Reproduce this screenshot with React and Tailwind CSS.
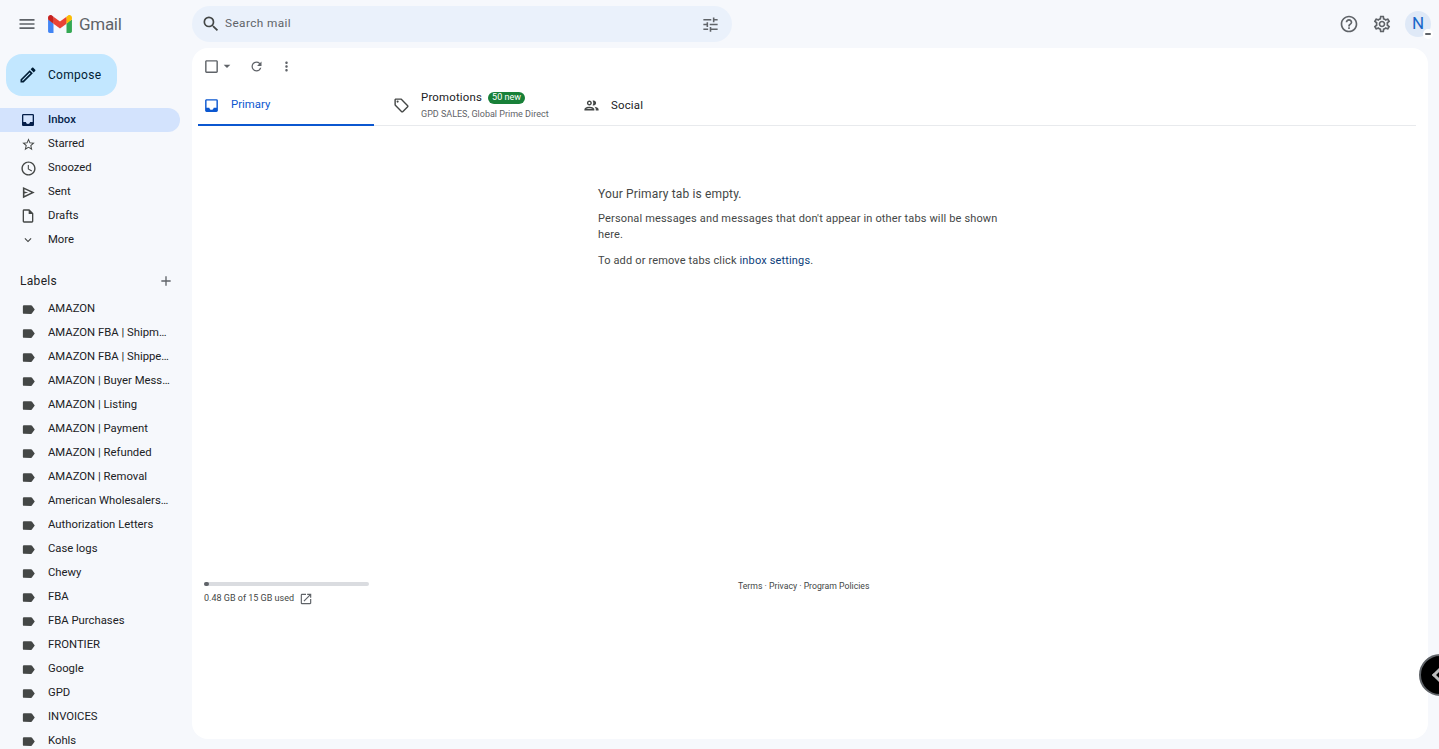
import React from "react";
import {
  MdMenu, MdSearch, MdTune, MdHelpOutline, MdOutlineSettings, MdStarBorder, MdAccessTime,
  MdOutlineInsertDriveFile, MdExpandMore, MdAdd, MdLabel, MdInbox, MdOutlineLocalOffer, MdOutlinePeople,
  MdRefresh, MdMoreVert, MdArrowDropDown, MdCheckBoxOutlineBlank, MdOpenInNew, MdOutlineEdit,
} from "react-icons/md";

function Sent({ size = 20, className }) {
  return (
    <svg width={size} height={size} viewBox="0 0 24 24" fill="currentColor" className={className}>
      <path d="M3 21V3l19 9-19 9zm2.500-3.900L16.400 12 5.500 6.900v3.400l6 1.700-6 1.700v3.400z" />
    </svg>
  );
}

const nav = [
  ["Starred", MdStarBorder, 15],
  ["Snoozed", MdAccessTime, 17],
  ["Sent", Sent, 15],
  ["Drafts", MdOutlineInsertDriveFile, 16],
  ["More", MdExpandMore, 14],
];

const labels = [
  "AMAZON",
  "AMAZON FBA | Shipment Closed",
  "AMAZON FBA | Shipped Items",
  "AMAZON | Buyer Messages",
  "AMAZON | Listing",
  "AMAZON | Payment",
  "AMAZON | Refunded",
  "AMAZON | Removal",
  "American Wholesalers Inc",
  "Authorization Letters",
  "Case logs",
  "Chewy",
  "FBA",
  "FBA Purchases",
  "FRONTIER",
  "Google",
  "GPD",
  "INVOICES",
  "Kohls",
  "Macys",
];

function Row({ icon: Icon, text, iconSize = 20, active }) {
  return (
    <div className={`flex h-6 w-[180px] shrink-0 items-center rounded-r-full pl-[18px] ${active ? "bg-[#d3e3fd] text-[#041e49]" : "text-[#202124]"}`}>
      <span className={`flex w-5 justify-center ${active ? "text-[#041e49]" : "text-[#444746]"}`}>
        <Icon size={iconSize} />
      </span>
      <span className={`ml-[10px] w-[123px] truncate pt-px text-[11.3px] ${active ? "font-medium" : ""}`}>{text}</span>
    </div>
  );
}

export default function App() {
  return (
    <div className="flex h-screen flex-col overflow-hidden bg-[#f6f8fc] font-['Roboto',sans-serif] text-[#202124]">
      <header className="flex h-12 shrink-0 items-center">
        <div className="flex w-[192px] items-center pl-[17px]">
          <MdMenu size={20} className="text-[#5f6368]" />
          <svg width="24" height="18" viewBox="0 0 256 193" className="ml-[11px]">
            <path fill="#4285F4" d="M58.182 192.05V93.14L27.507 65.077 0 49.504v125.091c0 9.658 7.825 17.455 17.455 17.455h40.727Z" />
            <path fill="#34A853" d="M197.818 192.05h40.727c9.659 0 17.455-7.826 17.455-17.455V49.505l-31.156 17.837-27.026 25.798v98.91Z" />
            <path fill="#EA4335" d="m58.182 93.14-4.174-38.647 4.174-36.989L128 69.868l69.818-52.364 4.669 34.992-4.669 40.644L128 145.504z" />
            <path fill="#FBBC04" d="M197.818 17.504V93.14L256 49.504V26.231c0-21.585-24.64-33.89-41.89-20.945l-16.292 12.218Z" />
            <path fill="#C5221F" d="m0 49.504 26.759 20.07L58.182 93.14V17.504L41.89 5.286C24.61-7.66 0 4.646 0 26.23v23.273Z" />
          </svg>
          <span className="ml-[7px] text-[17px] leading-none tracking-[-0.3px] text-[#5f6368]">Gmail</span>
        </div>
        <div className="flex h-9 w-[540px] items-center rounded-full bg-[#eaf1fb] pl-[9px] pr-[12px]">
          <MdSearch size={20} className="text-[#444746]" />
          <span className="ml-[4px] flex-1 text-[11.8px] tracking-[0.4px] text-[#5f6368]">Search mail</span>
          <MdTune size={19} className="text-[#5f6368]" />
        </div>
        <div className="ml-auto flex items-center pr-[8px]">
          <MdHelpOutline size={20} className="text-[#5f6368]" />
          <MdOutlineSettings size={20} className="ml-[13px] text-[#5f6368]" />
          <div className="relative ml-[13px] flex h-[26px] w-[26px] items-center justify-center rounded-full bg-[#dfe9f7] text-[17px] text-[#1a67c9]">
            N
            <span className="absolute -bottom-[2px] -right-[2px] flex h-[10px] w-[10px] items-center justify-center rounded-full bg-white">
              <span className="h-[2px] w-[6px] rounded-full bg-[#5f6368]" />
            </span>
          </div>
        </div>
      </header>

      <div className="flex min-h-0 flex-1">
        <aside className="flex w-[192px] shrink-0 flex-col overflow-hidden">
          <button className="ml-[6px] mt-[6px] flex h-[42px] w-[111px] shrink-0 items-center rounded-2xl bg-[#c2e7ff] pl-[12px] text-[12px] font-normal tracking-[0.3px] text-[#001d35]">
            <MdOutlineEdit size={20} />
            <span className="ml-[10px]">Compose</span>
          </button>
          <div className="mt-3 flex flex-col">
            <Row icon={MdInbox} text="Inbox" iconSize={16} active />
            {nav.map(([t, I, s]) => (
              <Row key={t} icon={I} text={t} iconSize={s} />
            ))}
          </div>
          <div className="mt-[17px] flex h-6 w-[180px] shrink-0 items-center justify-between pl-5 pr-[6px]">
            <span className="text-[12px] tracking-[0.3px] text-[#202124]">Labels</span>
            <MdAdd size={16} className="text-[#5f6368]" />
          </div>
          <div className="mt-1 flex flex-col">
            {labels.map((t) => (
              <Row key={t} icon={MdLabel} text={t} iconSize={15} />
            ))}
          </div>
        </aside>

        <main className="mb-[10px] mr-[11px] flex min-w-0 flex-1 flex-col rounded-2xl bg-white">
          <div className="flex h-9 shrink-0 items-center pl-[11px] text-[#5f6368]">
            <MdCheckBoxOutlineBlank size={17} />
            <MdArrowDropDown size={16} className="ml-[-1px]" />
            <MdRefresh size={15} className="ml-[14px]" />
            <MdMoreVert size={15} className="ml-[15px]" />
          </div>
          <div className="ml-[6px] mr-3 mt-[2px] flex h-10 shrink-0 border-b border-[#e8eaed]">
            <div className="flex h-10 w-[176px] items-center border-b-2 border-[#0b57d0] pl-[3px] text-[#0b57d0]">
              <span className="flex w-5 justify-center"><MdInbox size={17} /></span>
              <span className="ml-[10px] text-[11.4px] font-normal text-[#0b57d0]">Primary</span>
            </div>
            <div className="flex h-[39px] w-[190px] items-center pl-[17px] text-[#444746]">
              <span className="flex w-5 justify-center"><MdOutlineLocalOffer size={17} /></span>
              <div className="ml-[10px] flex flex-col">
                <div className="flex h-4 items-center">
                  <span className="text-[11.4px] tracking-[0.2px] text-[#202124]">Promotions</span>
                  <span className="ml-[6px] flex h-3 items-center whitespace-nowrap rounded-full bg-[#188038] px-[4px] text-[9px] text-white">50 new</span>
                </div>
                <span className="whitespace-nowrap text-[9px] leading-4 text-[#5f6368]">GPD SALES, Global Prime Direct</span>
              </div>
            </div>
            <div className="flex h-[39px] items-center pl-[17px] text-[#444746]">
              <span className="flex w-5 justify-center"><MdOutlinePeople size={17} /></span>
              <span className="ml-[10px] text-[11.4px] tracking-[0.2px] text-[#202124]">Social</span>
            </div>
          </div>

          <div className="ml-[406px] mt-[60px] flex w-[400px] flex-col text-[11px] leading-4 tracking-[0.15px] text-[#444746]">
            <p className="text-[12px] tracking-[0.15px]">Your Primary tab is empty.</p>
            <p className="mt-[9px]">Personal messages and messages that don't appear in other tabs will be shown here.</p>
            <p className="mt-[10px]">
              To add or remove tabs click <span className="text-[#0b3d7a]">inbox settings</span>.
            </p>
          </div>

          <div className="ml-3 mt-[309px] flex items-start">
            <div className="w-[165px] shrink-0">
              <div className="mt-[4px] h-1 w-full rounded-full bg-[#dadce0]">
                <div className="h-1 w-[5px] rounded-full bg-[#5f6368]" />
              </div>
              <div className="mt-[6px] flex items-center text-[9px] text-[#444746]">
                <span>0.48 GB of 15 GB used</span>
                <MdOpenInNew size={14} className="ml-[5px] text-[#5f6368]" />
              </div>
            </div>
            <p className="ml-[369px] text-[8.7px] leading-4 text-[#444746]">Terms · Privacy · Program Policies</p>
          </div>
        </main>
      </div>

      <div className="absolute left-[1419px] top-[654px] flex h-[42px] w-[42px] items-center rounded-full border-2 border-[#5f6368] bg-black pl-[13px]">
        <span className="block h-[10px] w-[10px] rotate-45 border-b-[3px] border-l-[3px] border-[#bdbdbd]" />
      </div>
    </div>
  );
}
